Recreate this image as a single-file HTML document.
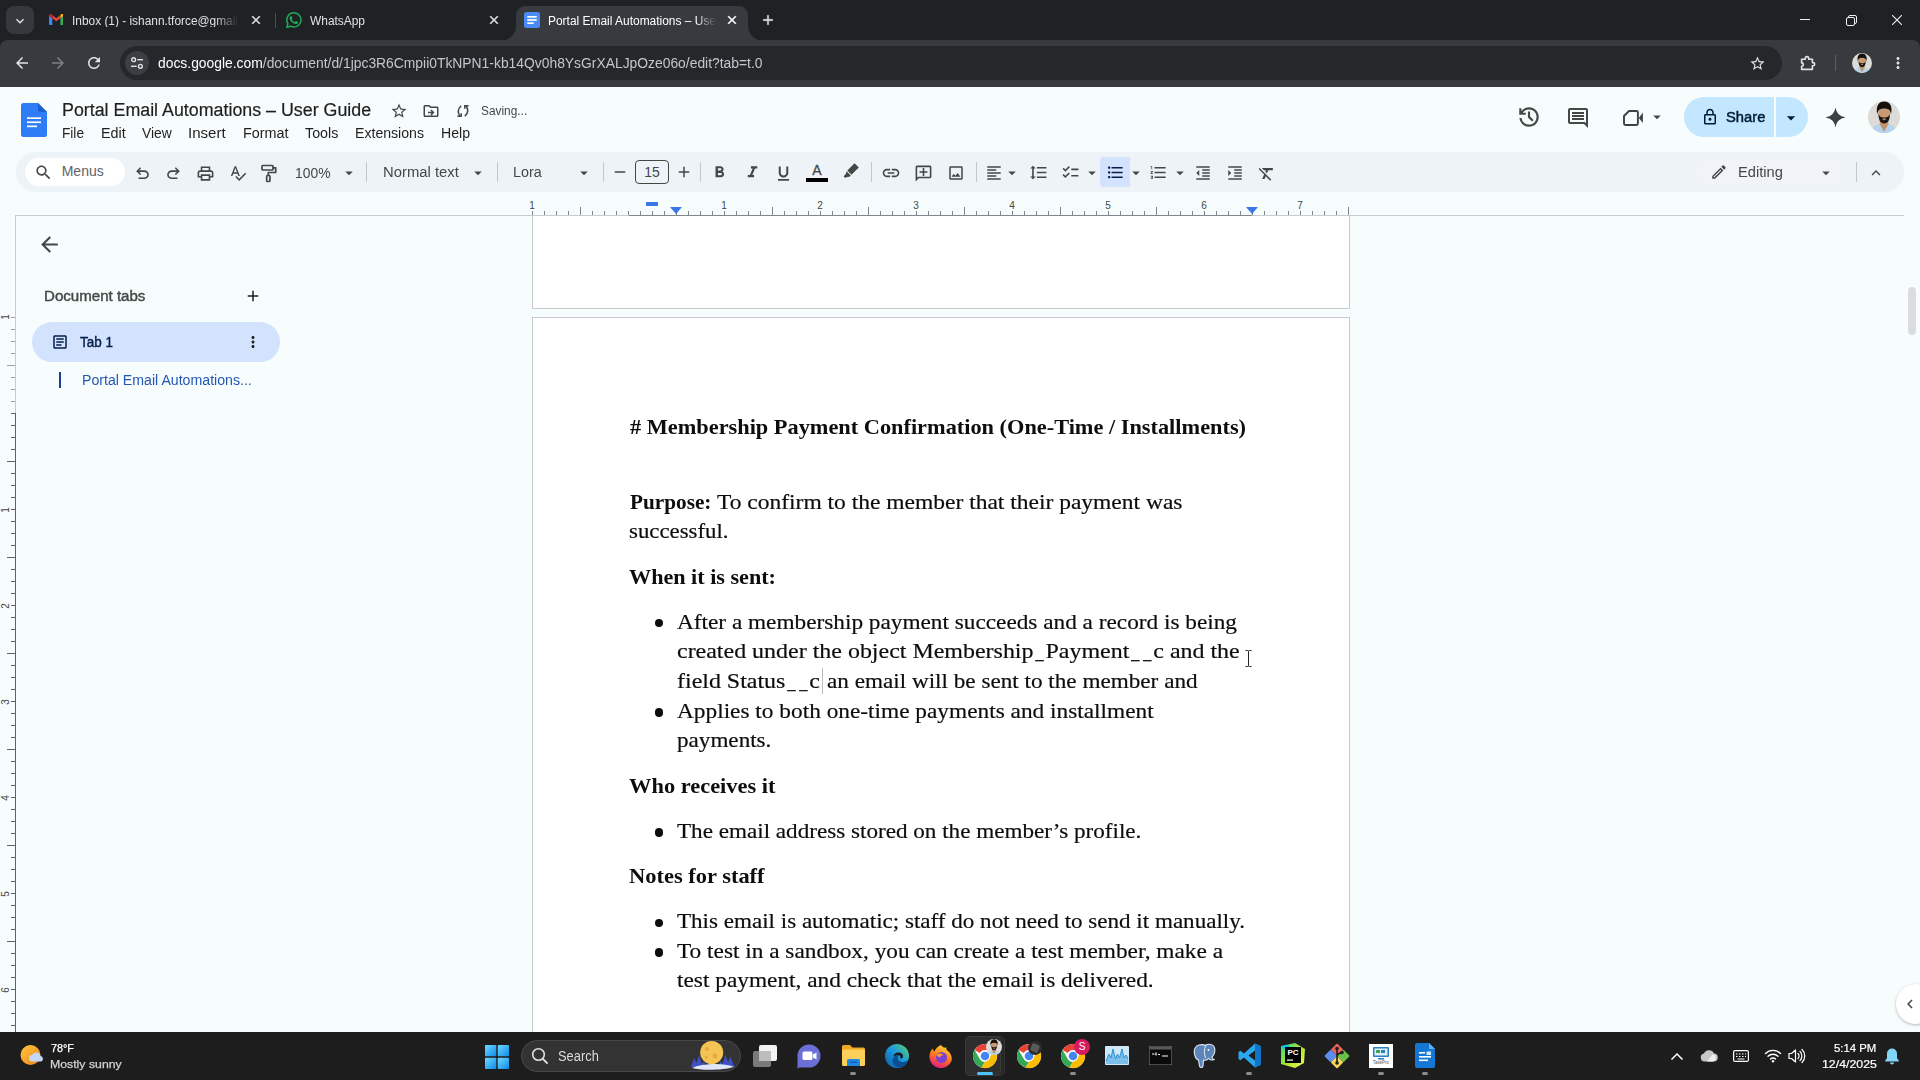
<!DOCTYPE html>
<html lang="en"><head><meta charset="utf-8"><title>Portal Email Automations – User Guide - Google Docs</title>
<style>
html,body{margin:0;padding:0}
body{width:1920px;height:1080px;overflow:hidden;position:relative;background:#f7fcfc;font-family:"Liberation Sans",sans-serif}
.a{position:absolute;display:block}
.t{position:absolute;display:block;white-space:nowrap;line-height:1;transform-origin:0 0;font-family:"Liberation Sans",sans-serif}
.s{font-family:"Liberation Serif",serif}
.u{display:inline-block;clip-path:inset(0 .07em)}
</style></head>
<body>
<div class="a" style="left:0px;top:0px;width:1920px;height:52px;background:#1f2225;"></div>
<div class="a" style="left:0px;top:40px;width:1920px;height:47px;background:#373a3e;border-radius:8px 8px 0 0;"></div>
<div class="a" style="left:6px;top:6px;width:28px;height:28px;background:#35383c;border-radius:8px;"></div>
<svg class="a" style="left:12.0px;top:12.5px;" width="16" height="16" viewBox="0 0 24 24" fill="#e3e3e3"><path d="M16.59 8.59L12 13.17 7.41 8.59 6 10l6 6 6-6z"/></svg>
<svg class="a" style="left:48.7px;top:14.3px;" width="14.7" height="11" viewBox="0 0 16 12"><path d="M0 1.600V11a1 1 0 0 0 1 1h2.600V4.600z" fill="#4285f4"/><path d="M16 1.600V11a1 1 0 0 1-1 1h-2.600V4.600z" fill="#34a853"/><path d="M12.400 1.200V4.600L16 1.900V1.400C16 .1 14.500-.5 13.500.3z" fill="#fbbc04"/><path d="M3.600 4.600V1.200L8 4.500l4.400-3.300v3.400L8 7.900z" fill="#ea4335"/><path d="M0 1.400v.5l3.600 2.700V1.200L2.500.3C1.500-.5 0 .1 0 1.400z" fill="#c5221f"/></svg>
<span class="t" id="t1" style="left:72.0px;top:14.8px;font-size:12px;color:#dfe1e5;transform:scaleX(0.9905);-webkit-mask-image:linear-gradient(90deg,#000 86%,transparent 100%);">Inbox (1) - ishann.tforce@gmail</span>
<svg class="a" style="left:249.0px;top:13.0px;stroke:#dfe1e5;stroke-width:.9;" width="14" height="14" viewBox="0 0 24 24" fill="#dfe1e5"><path d="M19 6.41L17.59 5 12 10.59 6.41 5 5 6.41 10.59 12 5 17.59 6.41 19 12 13.41 17.59 19 19 17.59 13.41 12z"/></svg>
<div class="a" style="left:275px;top:13px;width:1px;height:15px;background:#4a4d51;"></div>
<svg class="a" style="left:286px;top:12px;" width="16" height="16" viewBox="0 0 16 16"><path d="M8 .8A7.100 7.100 0 0 0 1.900 11.600L.9 15.200l3.700-1A7.100 7.100 0 1 0 8 .8z" fill="none" stroke="#1fad57" stroke-width="1.500"/><path d="M5.600 4.300c-.2-.4-.4-.4-.6-.4h-.5c-.2 0-.5.100-.7.400-.3.300-.9.900-.9 2.100s.9 2.400 1 2.600c.1.200 1.800 2.800 4.400 3.800 2.100.8 2.600.7 3 .6.500 0 1.500-.6 1.700-1.200.2-.600.2-1.100.1-1.200-.1-.1-.2-.2-.5-.3l-1.700-.8c-.2-.1-.4-.1-.6.100l-.8 1c-.1.200-.3.200-.5.100-.3-.1-1.100-.4-2-1.300-.8-.7-1.300-1.500-1.400-1.800-.1-.2 0-.4.100-.5l.4-.5c.1-.1.200-.3.200-.4.100-.2 0-.3 0-.4z" fill="#1fad57" transform="translate(1.200 1) scale(.82)"/></svg>
<span class="t" id="t2" style="left:310.0px;top:14.8px;font-size:12px;color:#dfe1e5;transform:scaleX(0.9935);">WhatsApp</span>
<svg class="a" style="left:487.0px;top:13.0px;stroke:#dfe1e5;stroke-width:.9;" width="14" height="14" viewBox="0 0 24 24" fill="#dfe1e5"><path d="M19 6.41L17.59 5 12 10.59 6.41 5 5 6.41 10.59 12 5 17.59 6.41 19 12 13.41 17.59 19 19 17.59 13.41 12z"/></svg>
<svg class="a" style="left:500px;top:6px;" width="264" height="35" viewBox="0 0 264 35"><path d="M0 35 C8 35 16 29 16 20 V10 C16 4 20 0 26 0 H238 C244 0 248 4 248 10 V20 C248 29 256 35 264 35 Z" fill="#373a3e"/></svg>
<svg class="a" style="left:524px;top:12px;" width="16" height="16" viewBox="0 0 16 16"><rect width="16" height="16" rx="2.500" fill="#4c8bf5"/><rect x="3.300" y="4" width="9.400" height="1.700" fill="#fff"/><rect x="3.300" y="7.150" width="9.400" height="1.700" fill="#fff"/><rect x="3.300" y="10.300" width="6.400" height="1.700" fill="#fff"/></svg>
<span class="t" id="t3" style="left:548.0px;top:14.8px;font-size:12px;color:#ffffff;transform:scaleX(0.9956);-webkit-mask-image:linear-gradient(90deg,#000 88%,transparent 100%);">Portal Email Automations – Use</span>
<svg class="a" style="left:724.5px;top:13.0px;stroke:#fff;stroke-width:.9;" width="14" height="14" viewBox="0 0 24 24" fill="#ffffff"><path d="M19 6.41L17.59 5 12 10.59 6.41 5 5 6.41 10.59 12 5 17.59 6.41 19 12 13.41 17.59 19 19 17.59 13.41 12z"/></svg>
<svg class="a" style="left:760.0px;top:12.0px;stroke:#e3e3e3;stroke-width:.6;" width="16" height="16" viewBox="0 0 24 24" fill="#e3e3e3"><path d="M19 13h-6v6h-2v-6H5v-2h6V5h2v6h6v2z"/></svg>
<div class="a" style="left:1800px;top:19px;width:10px;height:1px;background:#f0f0f0;"></div>
<svg class="a" style="left:1845.5px;top:14.5px;" width="11" height="11" viewBox="0 0 11 11"><rect x=".5" y="2.500" width="8" height="8" rx="1.500" fill="none" stroke="#f0f0f0"/><path d="M2.500 2.500V2a1.500 1.500 0 0 1 1.500-1.500h5A1.500 1.500 0 0 1 10.500 2v5A1.500 1.500 0 0 1 9 8.500h-.5" fill="none" stroke="#f0f0f0"/></svg>
<svg class="a" style="left:1892px;top:15px;" width="10" height="10" viewBox="0 0 10 10"><path d="M0 0l10 10M10 0L0 10" stroke="#f0f0f0" stroke-width="1.100"/></svg>
<svg class="a" style="left:13.0px;top:54.0px;" width="18" height="18" viewBox="0 0 24 24" fill="#e3e3e3"><path d="M20 11H7.83l5.59-5.59L12 4l-8 8 8 8 1.41-1.41L7.83 13H20v-2z"/></svg>
<svg class="a" style="left:48.5px;top:54.0px;" width="18" height="18" viewBox="0 0 24 24" fill="#7d8084"><path d="M12 4l-1.41 1.41L16.17 11H4v2h12.17l-5.58 5.59L12 20l8-8z"/></svg>
<svg class="a" style="left:85.0px;top:54.0px;" width="18" height="18" viewBox="0 0 24 24" fill="#e3e3e3"><path d="M17.65 6.35C16.2 4.9 14.21 4 12 4c-4.42 0-7.99 3.58-7.99 8s3.57 8 7.99 8c3.73 0 6.84-2.55 7.73-6h-2.08c-.82 2.33-3.04 4-5.65 4-3.31 0-6-2.69-6-6s2.69-6 6-6c1.66 0 3.14.69 4.22 1.78L13 11h7V4l-2.35 2.35z"/></svg>
<div class="a" style="left:120px;top:46px;width:1662px;height:34px;background:#25282b;border-radius:17px;"></div>
<div class="a" style="left:125px;top:51px;width:24px;height:24px;background:#3b3e42;border-radius:12px;"></div>
<svg class="a" style="left:129px;top:55px;" width="16" height="16" viewBox="0 0 16 16"><g fill="none" stroke="#e3e3e3" stroke-width="1.400"><circle cx="4.600" cy="4.700" r="1.900"/><path d="M8.300 4.700H14"/><circle cx="11.400" cy="11.300" r="1.900"/><path d="M2 11.300H7.700"/></g></svg>
<span class="t" id="t4" style="left:157.5px;top:56.1px;font-size:14px;color:#ffffff;transform:scaleX(0.9902);">docs.google.com<span style="color:#c3c6ca">/document/d/1jpc3R6Cmpii0TkNPN1-kb14Qv0h8YsGrXALJpOze06o/edit?tab=t.0</span></span>
<svg class="a" style="left:1749.3px;top:54.5px;" width="17" height="17" viewBox="0 0 24 24" fill="#e3e3e3"><path d="M22 9.24l-7.19-.62L12 2 9.19 8.63 2 9.24l5.46 4.73L5.82 21 12 17.27 18.18 21l-1.63-7.03L22 9.24zM12 15.4l-3.76 2.27 1-4.28-3.32-2.88 4.38-.38L12 6.1l1.71 4.04 4.38.38-3.32 2.88 1 4.28L12 15.4z"/></svg>
<svg class="a" style="left:1799px;top:54px;" width="18" height="18" viewBox="0 0 18 18"><path d="M2.600 5.200H6.300V4.300a1.700 1.700 0 0 1 3.400 0v.900H13.400V8.600h.700a1.600 1.600 0 0 1 0 3.200h-.700v3.600H2.600V12.300a1.700 1.700 0 0 0 0-3.400z" fill="none" stroke="#e3e3e3" stroke-width="1.600" stroke-linejoin="round"/></svg>
<div class="a" style="left:1835px;top:55px;width:1px;height:16px;background:#5a5d61;"></div>
<svg class="a" style="left:1852px;top:53px;" width="20" height="20" viewBox="0 0 32 32"><defs><clipPath id="c1"><circle cx="16" cy="16" r="16"/></clipPath></defs><g clip-path="url(#c1)"><rect width="32" height="32" fill="#dcdbd8"/><path d="M2 32C3 26.500 8 24 12 22.800L16 30l4-7.200C24 24 29 26.500 30 32z" fill="#b3d4ec"/><path d="M11.800 19.500h8.500V23.200L16 30.800 11.800 23.200z" fill="#c4946c"/><ellipse cx="16.200" cy="12.500" rx="5.800" ry="7.500" fill="#c99a72"/><path d="M10.400 12c0 7 2.100 10.500 5.800 10.500S22 19 22 12c-.5 3.500-2.500 4.500-5.800 4.500S10.900 15.500 10.400 12z" fill="#1d1612"/><ellipse cx="16.200" cy="18.300" rx="1.800" ry="1" fill="#a98366"/><path d="M9.300 13.500C7.500 5 11 .6 16.200 .6S25 5 23 13.500C22.500 9.500 21 7.500 16.200 7.500S9.800 9.500 9.300 13.500z" fill="#17110e"/></g></svg>
<svg class="a" style="left:1889.0px;top:54.0px;" width="18" height="18" viewBox="0 0 24 24" fill="#e3e3e3"><path d="M12 8c1.1 0 2-.9 2-2s-.9-2-2-2-2 .9-2 2 .9 2 2 2zm0 2c-1.1 0-2 .9-2 2s.9 2 2 2 2-.9 2-2-.9-2-2-2zm0 6c-1.1 0-2 .9-2 2s.9 2 2 2 2-.9 2-2-.9-2-2-2z"/></svg>
<div class="a" style="left:0px;top:87px;width:1920px;height:945px;background:#f7fcfc;"></div>
<svg class="a" style="left:21px;top:103px;" width="26" height="34" viewBox="0 0 26 34"><path d="M2.500 0H17l9 9v22.500A2.500 2.500 0 0 1 23.500 34h-21A2.500 2.500 0 0 1 0 31.500v-29A2.500 2.500 0 0 1 2.500 0z" fill="#2f7df6"/><path d="M17 0l9 9h-6.500A2.500 2.500 0 0 1 17 6.500z" fill="#1c5fd0"/><rect x="6" y="14.300" width="14" height="1.700" fill="#fff"/><rect x="6" y="18.400" width="14" height="1.700" fill="#fff"/><rect x="6" y="22.500" width="10" height="1.700" fill="#fff"/></svg>
<span class="t" id="t5" style="left:61.7px;top:100.8px;font-size:18px;color:#1f1f1f;transform:scaleX(0.9902);-webkit-text-stroke:.2px #1f1f1f;">Portal Email Automations – User Guide</span>
<svg class="a" style="left:389.8px;top:102.0px;" width="18" height="18" viewBox="0 0 24 24" fill="#444746"><path d="M22 9.24l-7.19-.62L12 2 9.19 8.63 2 9.24l5.46 4.73L5.82 21 12 17.27 18.18 21l-1.63-7.03L22 9.24zM12 15.4l-3.76 2.27 1-4.28-3.32-2.88 4.38-.38L12 6.1l1.71 4.04 4.38.38-3.32 2.88 1 4.28L12 15.4z"/></svg>
<svg class="a" style="left:421.8px;top:102.0px;" width="18" height="18" viewBox="0 0 24 24" fill="#444746"><path d="M20 6h-8l-2-2H4c-1.100 0-1.990.9-1.990 2L2 18c0 1.100.9 2 2 2h16c1.100 0 2-.9 2-2V8c0-1.100-.9-2-2-2zm0 12H4V6h5.170l2 2H20v10zm-7.160-5H8v2h4.840l-1.590 1.590L12.660 18l4-4-4-4-1.410 1.410L12.840 13z"/></svg>
<svg class="a" style="left:456px;top:103.8px;" width="14" height="14" viewBox="-7 -7 14 14"><g fill="none" stroke="#444746" stroke-width="1.500"><path d="M-1.800-5.300Q-7.200-.3-2.800 5.200"/><path d="M-5.600 5.300H-1.800V2.300"/><path d="M1.800 5.300Q7.200 .3 2.800-5.200"/><path d="M5.600-5.300H1.800V-2.300"/></g></svg>
<span class="t" id="t6" style="left:480.5px;top:105.1px;font-size:12.5px;color:#444746;transform:scaleX(0.9498);">Saving...</span>
<span class="t" id="t7" style="left:62.3px;top:126.1px;font-size:14px;color:#1f1f1f;transform:scaleX(0.9751);">File</span>
<span class="t" id="t8" style="left:101.0px;top:126.1px;font-size:14px;color:#1f1f1f;transform:scaleX(1.0238);">Edit</span>
<span class="t" id="t9" style="left:142.3px;top:126.1px;font-size:14px;color:#1f1f1f;transform:scaleX(0.9869);">View</span>
<span class="t" id="t10" style="left:188.3px;top:126.1px;font-size:14px;color:#1f1f1f;transform:scaleX(1.0767);">Insert</span>
<span class="t" id="t11" style="left:242.7px;top:126.1px;font-size:14px;color:#1f1f1f;transform:scaleX(1.0283);">Format</span>
<span class="t" id="t12" style="left:305.0px;top:126.1px;font-size:14px;color:#1f1f1f;transform:scaleX(1.0187);">Tools</span>
<span class="t" id="t13" style="left:355.3px;top:126.1px;font-size:14px;color:#1f1f1f;transform:scaleX(1.0075);">Extensions</span>
<span class="t" id="t14" style="left:441.3px;top:126.1px;font-size:14px;color:#1f1f1f;transform:scaleX(1.0071);">Help</span>
<svg class="a" style="left:1516.0px;top:103.8px;" width="26" height="26" viewBox="0 0 24 24" fill="#444746"><path d="M12 21q-3.450 0-6.013-2.288T3.050 13H5.100q.350 2.600 2.313 4.300T12 19q2.925 0 4.963-2.038T19 12q0-2.925-2.038-4.963T12 5q-1.725 0-3.225.800T6.250 8H9v2H3V4h2v2.350q1.275-1.600 3.113-2.475T12 3q1.875 0 3.513.713t2.850 1.924q1.212 1.213 1.925 2.850T21 12q0 1.875-.713 3.513t-1.924 2.850q-1.213 1.212-2.850 1.925T12 21Zm2.800-4.800L11 12.400V7h2v4.600l3.200 3.200-1.400 1.400Z"/></svg>
<svg class="a" style="left:1566.0px;top:105.5px;" width="24" height="24" viewBox="0 0 24 24" fill="#444746"><path d="M21.990 4c0-1.100-.890-2-1.990-2H4c-1.100 0-2 .9-2 2v12c0 1.100.9 2 2 2h14l4 4-.010-18zM20 4v13.170L18.830 16H4V4h16zM6 12h12v2H6zm0-3h12v2H6zm0-3h12v2H6z"/></svg>
<svg class="a" style="left:1620px;top:106px;" width="26" height="24" viewBox="0 0 26 24"><path d="M9 5H16.400a1.500 1.500 0 0 1 1.500 1.500V17.500a1.500 1.500 0 0 1-1.500 1.500H5.500A1.500 1.500 0 0 1 4 17.500V10z" fill="none" stroke="#3c4043" stroke-width="1.900" stroke-linejoin="round"/><path d="M18.800 11.900L22.900 6.600V17.100z" fill="#3c4043"/></svg>
<svg class="a" style="left:1648.0px;top:108.0px;" width="18" height="18" viewBox="0 0 24 24" fill="#444746"><path d="M7 10l5 5 5-5z"/></svg>
<div class="a" style="left:1684px;top:97px;width:124px;height:40px;background:#c2e7ff;border-radius:20px;"></div>
<div class="a" style="left:1774px;top:97px;width:1.5px;height:40px;background:#f7fcfc;"></div>
<svg class="a" style="left:1701.0px;top:107.5px;" width="18" height="18" viewBox="0 0 24 24" fill="#001d35"><path d="M18 8h-1V6c0-2.760-2.240-5-5-5S7 3.240 7 6v2H6c-1.100 0-2 .9-2 2v10c0 1.100.9 2 2 2h12c1.100 0 2-.9 2-2V10c0-1.100-.9-2-2-2zM9 6c0-1.660 1.340-3 3-3s3 1.340 3 3v2H9V6zm9 14H6V10h12v10zm-6-3c1.100 0 2-.9 2-2s-.9-2-2-2-2 .9-2 2 .9 2 2 2z"/></svg>
<span class="t" id="t15" style="left:1726.4px;top:109.5px;font-size:14px;color:#001d35;transform:scaleX(1.0546);-webkit-text-stroke:.45px #001d35;">Share</span>
<svg class="a" style="left:1780.5px;top:107.5px;" width="20" height="20" viewBox="0 0 24 24" fill="#001d35"><path d="M7 10l5 5 5-5z"/></svg>
<svg class="a" style="left:1824.3px;top:105.5px;" width="23" height="23" viewBox="0 0 24 24" fill="#3c4043"><path d="M12 1.500Q13.300 10.700 22.500 12 13.300 13.300 12 22.500 10.700 13.300 1.500 12 10.700 10.700 12 1.500Z"/></svg>
<svg class="a" style="left:1868px;top:101px;" width="32" height="32" viewBox="0 0 32 32"><defs><clipPath id="c2"><circle cx="16" cy="16" r="16"/></clipPath></defs><g clip-path="url(#c2)"><rect width="32" height="32" fill="#dcdbd8"/><path d="M2 32C3 26.500 8 24 12 22.800L16 30l4-7.200C24 24 29 26.500 30 32z" fill="#b3d4ec"/><path d="M11.800 19.500h8.500V23.200L16 30.800 11.800 23.200z" fill="#c4946c"/><ellipse cx="16.200" cy="12.500" rx="5.800" ry="7.500" fill="#c99a72"/><path d="M10.400 12c0 7 2.100 10.500 5.800 10.500S22 19 22 12c-.5 3.500-2.500 4.500-5.800 4.500S10.900 15.500 10.400 12z" fill="#1d1612"/><ellipse cx="16.200" cy="18.300" rx="1.800" ry="1" fill="#a98366"/><path d="M9.300 13.500C7.500 5 11 .6 16.200 .6S25 5 23 13.500C22.500 9.500 21 7.500 16.200 7.500S9.800 9.500 9.300 13.500z" fill="#17110e"/></g></svg>
<div class="a" style="left:16px;top:152px;width:1888px;height:40px;background:#eef3f8;border-radius:20px;"></div>
<div class="a" style="left:25px;top:158px;width:100px;height:28px;background:#ffffff;border-radius:14px;"></div>
<svg class="a" style="left:34.0px;top:163.0px;" width="19" height="19" viewBox="0 0 24 24" fill="#444746"><path d="M15.5 14h-.79l-.28-.27C15.41 12.59 16 11.11 16 9.5 16 5.91 13.09 3 9.5 3S3 5.91 3 9.5 5.91 16 9.5 16c1.61 0 3.09-.59 4.23-1.57l.27.28v.79l5 4.99L20.49 19l-4.99-5zm-6 0C7.01 14 5 11.99 5 9.5S7.01 5 9.5 5 14 7.01 14 9.5 11.99 14 9.5 14z"/></svg>
<span class="t" id="t16" style="left:61.7px;top:163.7px;font-size:14px;color:#5f6368;">Menus</span>
<svg class="a" style="left:132.5px;top:163.5px;" width="19" height="19" viewBox="0 0 24 24" fill="#444746"><path d="M7 19v-2h7.1q1.575 0 2.738-1T18 13.5q0-1.5-1.163-2.5T14.1 10H7.8l2.6 2.6L9 14 4 9l5-5 1.4 1.4L7.8 8h6.3q2.425 0 4.163 1.575T20 13.5q0 2.35-1.737 3.925T14.1 19H7Z"/></svg>
<svg class="a" style="left:164.2px;top:163.5px;transform:scaleX(-1);" width="19" height="19" viewBox="0 0 24 24" fill="#444746"><path d="M7 19v-2h7.1q1.575 0 2.738-1T18 13.5q0-1.5-1.163-2.5T14.1 10H7.8l2.6 2.6L9 14 4 9l5-5 1.4 1.4L7.8 8h6.3q2.425 0 4.163 1.575T20 13.5q0 2.35-1.737 3.925T14.1 19H7Z"/></svg>
<svg class="a" style="left:196.3px;top:163.5px;" width="19" height="19" viewBox="0 0 24 24" fill="#444746"><path d="M19 8h-1V3H6v5H5c-1.66 0-3 1.34-3 3v6h4v4h12v-4h4v-6c0-1.66-1.34-3-3-3zM8 5h8v3H8V5zm8 14H8v-4h8v4zm2-4v-2H6v2H4v-4c0-.55.45-1 1-1h14c.55 0 1 .45 1 1v4h-2z"/></svg>
<svg class="a" style="left:229.0px;top:164.0px;" width="18" height="18" viewBox="0 0 24 24" fill="#444746"><path d="M12.45 16h2.09L9.43 3H7.57L2.46 16h2.09l1.12-3h5.64l1.14 3zm-6.02-5L8.5 5.48 10.57 11H6.43zm15.16.59l-8.09 8.09L9.83 16l-1.41 1.41 5.09 5.09L23 13l-1.41-1.41z"/></svg>
<svg class="a" style="left:260px;top:164px;" width="18" height="19" viewBox="0 0 18 19"><g fill="none" stroke="#444746" stroke-width="1.700" stroke-linejoin="round"><rect x="2" y="1.500" width="11" height="4.500" rx=".8"/><path d="M13 3.800h2.700v4.700H8.300v3"/><rect x="6.700" y="11.500" width="3.200" height="6" rx=".8"/></g></svg>
<span class="t" id="t17" style="left:295.3px;top:165.7px;font-size:14px;color:#444746;transform:scaleX(0.9913);">100%</span>
<svg class="a" style="left:339.8px;top:163.7px;" width="18" height="18" viewBox="0 0 24 24" fill="#444746"><path d="M7 10l5 5 5-5z"/></svg>
<div class="a" style="left:366px;top:162px;width:1px;height:20px;background:#c7c7c7;"></div>
<span class="t" id="t18" style="left:382.5px;top:165.1px;font-size:14px;color:#444746;transform:scaleX(1.0590);">Normal text</span>
<svg class="a" style="left:468.8px;top:163.7px;" width="18" height="18" viewBox="0 0 24 24" fill="#444746"><path d="M7 10l5 5 5-5z"/></svg>
<div class="a" style="left:497px;top:162px;width:1px;height:20px;background:#c7c7c7;"></div>
<span class="t" id="t19" style="left:513.3px;top:165.1px;font-size:14px;color:#444746;transform:scaleX(1.0239);">Lora</span>
<svg class="a" style="left:574.7px;top:163.7px;" width="18" height="18" viewBox="0 0 24 24" fill="#444746"><path d="M7 10l5 5 5-5z"/></svg>
<div class="a" style="left:603px;top:162px;width:1px;height:20px;background:#c7c7c7;"></div>
<svg class="a" style="left:611.0px;top:163.0px;" width="18" height="18" viewBox="0 0 24 24" fill="#444746"><path d="M19 13H5v-2h14v2z"/></svg>
<div class="a" style="left:635px;top:160px;width:32px;height:22px;border:1px solid #444746;border-radius:4px;"></div>
<span class="t" style="left:652.0px;top:164.9px;font-size:14px;color:#444746;width:60px;margin-left:-30px;text-align:center;">15</span>
<svg class="a" style="left:674.8px;top:163.0px;" width="18" height="18" viewBox="0 0 24 24" fill="#444746"><path d="M19 13h-6v6h-2v-6H5v-2h6V5h2v6h6v2z"/></svg>
<div class="a" style="left:700px;top:162px;width:1px;height:20px;background:#c7c7c7;"></div>
<svg class="a" style="left:710.2px;top:163.0px;" width="19" height="19" viewBox="0 0 24 24" fill="#444746"><path d="M15.6 10.79c.97-.67 1.65-1.77 1.65-2.79 0-2.26-1.75-4-4-4H7v14h7.04c2.09 0 3.71-1.7 3.71-3.79 0-1.52-.86-2.82-2.15-3.42zM10 6.5h3c.83 0 1.5.67 1.5 1.5s-.67 1.5-1.5 1.5h-3v-3zm3.500 9H10v-3h3.500c.83 0 1.500.67 1.500 1.500s-.67 1.500-1.500 1.500z"/></svg>
<svg class="a" style="left:742.5px;top:163.0px;" width="19" height="19" viewBox="0 0 24 24" fill="#444746"><path d="M10 4v3h2.21l-3.42 8H6v3h8v-3h-2.21l3.42-8H18V4z"/></svg>
<svg class="a" style="left:774.3px;top:163.5px;" width="19" height="19" viewBox="0 0 24 24" fill="#444746"><path d="M12 17c3.31 0 6-2.69 6-6V3h-2.5v8c0 1.93-1.57 3.5-3.5 3.5S8.5 12.930 8.5 11V3H6v8c0 3.31 2.69 6 6 6zm-7 2v2h14v-2H5z"/></svg>
<span class="t" style="left:817.0px;top:163.3px;font-size:14px;color:#444746;width:60px;margin-left:-30px;text-align:center;-webkit-text-stroke:.3px #444746;">A</span>
<div class="a" style="left:806px;top:178px;width:22px;height:4px;background:#000000;"></div>
<svg class="a" style="left:841px;top:161px;" width="20" height="20" viewBox="0 0 20 20"><path d="M13.600 2.200l4.200 4.200-7.300 7.300-4.200-4.200z" fill="#444746"/><path d="M5.600 10.200l4.200 4.200-1.400 1.400-3.200.4-.8.800-1.800-1.800 2.200-2.200z" fill="#444746"/></svg>
<div class="a" style="left:871px;top:162px;width:1px;height:20px;background:#c7c7c7;"></div>
<svg class="a" style="left:880.8px;top:162.7px;" width="20" height="20" viewBox="0 0 24 24" fill="#444746"><path d="M3.9 12c0-1.71 1.39-3.1 3.1-3.1h4V7H7c-2.76 0-5 2.24-5 5s2.24 5 5 5h4v-1.9H7c-1.71 0-3.1-1.39-3.1-3.1zM8 13h8v-2H8v2zm9-6h-4v1.9h4c1.71 0 3.1 1.39 3.1 3.1s-1.39 3.1-3.1 3.1h-4V17h4c2.76 0 5-2.24 5-5s-2.240-5-5-5z"/></svg>
<svg class="a" style="left:913.5px;top:164.2px;transform:scaleX(-1);" width="19" height="19" viewBox="0 0 24 24" fill="#444746"><path d="M22 4c0-1.100-.9-2-2-2H4c-1.100 0-2 .9-2 2v12c0 1.100.9 2 2 2h14l4 4V4zm-2 13.170L18.830 16H4V4h16v13.170zM13 5h-2v4H7v2h4v4h2v-4h4V9h-4z"/></svg>
<svg class="a" style="left:946.8px;top:163.7px;" width="18" height="18" viewBox="0 0 24 24" fill="#444746"><path d="M19 5v14H5V5h14m0-2H5c-1.100 0-2 .9-2 2v14c0 1.100.9 2 2 2h14c1.100 0 2-.9 2-2V5c0-1.100-.9-2-2-2zm-4.860 8.860l-3 3.870L9 13.140 6 17h12l-3.860-5.140z"/></svg>
<div class="a" style="left:976px;top:162px;width:1px;height:20px;background:#c7c7c7;"></div>
<svg class="a" style="left:984.8px;top:163.7px;" width="18" height="18" viewBox="0 0 24 24" fill="#444746"><path d="M15 15H3v2h12v-2zm0-8H3v2h12V7zM3 13h18v-2H3v2zm0 8h18v-2H3v2zM3 3v2h18V3H3z"/></svg>
<svg class="a" style="left:1003.0px;top:163.7px;" width="18" height="18" viewBox="0 0 24 24" fill="#444746"><path d="M7 10l5 5 5-5z"/></svg>
<svg class="a" style="left:1028.5px;top:163.2px;" width="19" height="19" viewBox="0 0 24 24" fill="#444746"><path d="M6 7h2.5L5 3.5 1.5 7H4v10H1.5L5 20.500 8.500 17H6V7zm4-2v2h12V5H10zm0 14h12v-2H10v2zm0-6h12v-2H10v2z"/></svg>
<svg class="a" style="left:1061.3px;top:163.2px;" width="19" height="19" viewBox="0 0 24 24" fill="#444746"><path d="M22 7h-9v2h9V7zm0 8h-9v2h9v-2zM5.540 11L2 7.460l1.410-1.410 2.120 2.120 4.240-4.240 1.410 1.410L5.540 11zm0 8L2 15.460l1.410-1.410 2.120 2.120 4.240-4.240 1.410 1.410L5.540 19z"/></svg>
<svg class="a" style="left:1082.7px;top:163.7px;" width="18" height="18" viewBox="0 0 24 24" fill="#444746"><path d="M7 10l5 5 5-5z"/></svg>
<div class="a" style="left:1100px;top:157px;width:30px;height:30px;background:#d3e3fd;border-radius:4px 0 0 4px;"></div>
<svg class="a" style="left:1105.5px;top:163.2px;" width="19" height="19" viewBox="0 0 24 24" fill="#041e49"><path d="M4 10.500c-.830 0-1.500.670-1.500 1.500s.670 1.500 1.500 1.500 1.500-.670 1.500-1.500-.670-1.500-1.500-1.500zm0-6c-.830 0-1.500.670-1.500 1.500S3.170 7.500 4 7.500 5.500 6.830 5.500 6 4.830 4.500 4 4.500zm0 12c-.830 0-1.500.680-1.500 1.500s.680 1.500 1.500 1.500 1.500-.680 1.500-1.500-.670-1.500-1.500-1.500zM7 19h14v-2H7v2zm0-6h14v-2H7v2zm0-8v2h14V5H7z"/></svg>
<svg class="a" style="left:1126.8px;top:163.7px;" width="18" height="18" viewBox="0 0 24 24" fill="#444746"><path d="M7 10l5 5 5-5z"/></svg>
<svg class="a" style="left:1149.3px;top:163.2px;" width="19" height="19" viewBox="0 0 24 24" fill="#444746"><path d="M2 17h2v.5H3v1h1v.5H2v1h3v-4H2v1zm1-9h1V4H2v1h1v3zm-1 3h1.800L2 13.100v.9h3v-1H3.200L5 10.900V10H2v1zm5-6v2h14V5H7zm0 14h14v-2H7v2zm0-6h14v-2H7v2z"/></svg>
<svg class="a" style="left:1171.0px;top:163.7px;" width="18" height="18" viewBox="0 0 24 24" fill="#444746"><path d="M7 10l5 5 5-5z"/></svg>
<svg class="a" style="left:1194.0px;top:163.7px;" width="18" height="18" viewBox="0 0 24 24" fill="#444746"><path d="M11 17h10v-2H11v2zm-8-5l4 4V8l-4 4zm0 9h18v-2H3v2zM3 3v2h18V3H3zm8 6h10V7H11v2zm0 4h10v-2H11v2z"/></svg>
<svg class="a" style="left:1226.0px;top:163.7px;" width="18" height="18" viewBox="0 0 24 24" fill="#444746"><path d="M3 21h18v-2H3v2zM3 8v8l4-4-4-4zm8 9h10v-2H11v2zM3 3v2h18V3H3zm8 6h10V7H11v2zm0 4h10v-2H11v2z"/></svg>
<svg class="a" style="left:1257.2px;top:163.5px;" width="19" height="19" viewBox="0 0 24 24" fill="#444746"><path d="M3.270 5L2 6.270l6.970 6.970L6.500 19h3l1.570-3.660L16.730 21 18 19.730 3.550 5.270 3.270 5zM6 5v.180L8.820 8h2.400l-.720 1.680 2.100 2.100L14.210 8H20V5H6z"/></svg>
<div class="a" style="left:1696px;top:156.5px;width:151px;height:31px;background:#f0f4f9;border-radius:16px;"></div>
<svg class="a" style="left:1709.8px;top:163.0px;" width="18" height="18" viewBox="0 0 24 24" fill="#444746"><path d="M14.060 9.020l.920.920L5.920 19H5v-.920l9.060-9.060M17.660 3c-.250 0-.510.100-.700.290l-1.830 1.830 3.750 3.750 1.830-1.830c.390-.390.390-1.020 0-1.410l-2.340-2.340c-.200-.200-.450-.290-.710-.290zm-3.600 3.190L3 17.250V21h3.750L17.810 9.940l-3.750-3.750z"/></svg>
<span class="t" id="t20" style="left:1737.8px;top:164.9px;font-size:14px;color:#444746;transform:scaleX(1.0464);">Editing</span>
<svg class="a" style="left:1817.0px;top:163.7px;" width="18" height="18" viewBox="0 0 24 24" fill="#444746"><path d="M7 10l5 5 5-5z"/></svg>
<div class="a" style="left:1856px;top:162px;width:1px;height:20px;background:#c7c7c7;"></div>
<svg class="a" style="left:1866.8px;top:164.0px;" width="18" height="18" viewBox="0 0 24 24" fill="#444746"><path d="M12 8l-6 6 1.41 1.41L12 10.83l4.59 4.58L18 14z"/></svg>
<div class="a" style="left:15px;top:215px;width:1889px;height:1px;background:#c9cccf;"></div>
<div class="a" style="left:15px;top:215px;width:1px;height:817px;background:#c9cccf;"></div>
<div class="a" style="left:15px;top:413px;width:1px;height:619px;background:#5f6368;"></div>
<div class="a" style="left:629px;top:215px;width:623px;height:1px;background:#80868b;"></div>
<svg class="a" style="left:532px;top:206px;" width="818" height="10" viewBox="0 0 818 10"><g fill="#80868b"><rect x="0" y="5" width="1" height="4"/><rect x="12" y="5" width="1" height="4"/><rect x="24" y="5" width="1" height="4"/><rect x="36" y="5" width="1" height="4"/><rect x="48" y="1" width="1" height="8"/><rect x="60" y="5" width="1" height="4"/><rect x="72" y="5" width="1" height="4"/><rect x="84" y="5" width="1" height="4"/><rect x="96" y="5" width="1" height="4"/><rect x="108" y="5" width="1" height="4"/><rect x="120" y="5" width="1" height="4"/><rect x="132" y="5" width="1" height="4"/><rect x="144" y="1" width="1" height="8"/><rect x="156" y="5" width="1" height="4"/><rect x="168" y="5" width="1" height="4"/><rect x="180" y="5" width="1" height="4"/><rect x="192" y="5" width="1" height="4"/><rect x="204" y="5" width="1" height="4"/><rect x="216" y="5" width="1" height="4"/><rect x="228" y="5" width="1" height="4"/><rect x="240" y="1" width="1" height="8"/><rect x="252" y="5" width="1" height="4"/><rect x="264" y="5" width="1" height="4"/><rect x="276" y="5" width="1" height="4"/><rect x="288" y="5" width="1" height="4"/><rect x="300" y="5" width="1" height="4"/><rect x="312" y="5" width="1" height="4"/><rect x="324" y="5" width="1" height="4"/><rect x="336" y="1" width="1" height="8"/><rect x="348" y="5" width="1" height="4"/><rect x="360" y="5" width="1" height="4"/><rect x="372" y="5" width="1" height="4"/><rect x="384" y="5" width="1" height="4"/><rect x="396" y="5" width="1" height="4"/><rect x="408" y="5" width="1" height="4"/><rect x="420" y="5" width="1" height="4"/><rect x="432" y="1" width="1" height="8"/><rect x="444" y="5" width="1" height="4"/><rect x="456" y="5" width="1" height="4"/><rect x="468" y="5" width="1" height="4"/><rect x="480" y="5" width="1" height="4"/><rect x="492" y="5" width="1" height="4"/><rect x="504" y="5" width="1" height="4"/><rect x="516" y="5" width="1" height="4"/><rect x="528" y="1" width="1" height="8"/><rect x="540" y="5" width="1" height="4"/><rect x="552" y="5" width="1" height="4"/><rect x="564" y="5" width="1" height="4"/><rect x="576" y="5" width="1" height="4"/><rect x="588" y="5" width="1" height="4"/><rect x="600" y="5" width="1" height="4"/><rect x="612" y="5" width="1" height="4"/><rect x="624" y="1" width="1" height="8"/><rect x="636" y="5" width="1" height="4"/><rect x="648" y="5" width="1" height="4"/><rect x="660" y="5" width="1" height="4"/><rect x="672" y="5" width="1" height="4"/><rect x="684" y="5" width="1" height="4"/><rect x="696" y="5" width="1" height="4"/><rect x="708" y="5" width="1" height="4"/><rect x="720" y="1" width="1" height="8"/><rect x="732" y="5" width="1" height="4"/><rect x="744" y="5" width="1" height="4"/><rect x="756" y="5" width="1" height="4"/><rect x="768" y="5" width="1" height="4"/><rect x="780" y="5" width="1" height="4"/><rect x="792" y="5" width="1" height="4"/><rect x="804" y="5" width="1" height="4"/><rect x="816" y="1" width="1" height="8"/></g></svg>
<span class="t" style="left:532.0px;top:201.1px;font-size:10px;color:#444746;width:60px;margin-left:-30px;text-align:center;">1</span>
<span class="t" style="left:724.0px;top:201.1px;font-size:10px;color:#444746;width:60px;margin-left:-30px;text-align:center;">1</span>
<span class="t" style="left:820.0px;top:201.1px;font-size:10px;color:#444746;width:60px;margin-left:-30px;text-align:center;">2</span>
<span class="t" style="left:916.0px;top:201.1px;font-size:10px;color:#444746;width:60px;margin-left:-30px;text-align:center;">3</span>
<span class="t" style="left:1012.0px;top:201.1px;font-size:10px;color:#444746;width:60px;margin-left:-30px;text-align:center;">4</span>
<span class="t" style="left:1108.0px;top:201.1px;font-size:10px;color:#444746;width:60px;margin-left:-30px;text-align:center;">5</span>
<span class="t" style="left:1204.0px;top:201.1px;font-size:10px;color:#444746;width:60px;margin-left:-30px;text-align:center;">6</span>
<span class="t" style="left:1300.0px;top:201.1px;font-size:10px;color:#444746;width:60px;margin-left:-30px;text-align:center;">7</span>
<div class="a" style="left:646px;top:202px;width:12px;height:4px;background:#3b78e7;"></div>
<svg class="a" style="left:670px;top:207px;" width="12" height="7" viewBox="0 0 12 7"><path d="M0 0H12L6 7z" fill="#3b78e7"/></svg>
<svg class="a" style="left:1246px;top:207px;" width="12" height="7" viewBox="0 0 12 7"><path d="M0 0H12L6 7z" fill="#3b78e7"/></svg>
<svg class="a" style="left:0px;top:300px;" width="16" height="732" viewBox="0 0 16 732"><rect x="11" y="17" width="4" height="1" fill="#9aa0a6"/><rect x="11" y="29" width="4" height="1" fill="#9aa0a6"/><rect x="11" y="41" width="4" height="1" fill="#9aa0a6"/><rect x="11" y="53" width="4" height="1" fill="#9aa0a6"/><rect x="7" y="65" width="8" height="1" fill="#9aa0a6"/><rect x="11" y="77" width="4" height="1" fill="#9aa0a6"/><rect x="11" y="89" width="4" height="1" fill="#9aa0a6"/><rect x="11" y="101" width="4" height="1" fill="#9aa0a6"/><rect x="11" y="113" width="4" height="1" fill="#5f6368"/><rect x="11" y="125" width="4" height="1" fill="#5f6368"/><rect x="11" y="137" width="4" height="1" fill="#5f6368"/><rect x="11" y="149" width="4" height="1" fill="#5f6368"/><rect x="7" y="161" width="8" height="1" fill="#5f6368"/><rect x="11" y="173" width="4" height="1" fill="#5f6368"/><rect x="11" y="185" width="4" height="1" fill="#5f6368"/><rect x="11" y="197" width="4" height="1" fill="#5f6368"/><rect x="11" y="209" width="4" height="1" fill="#5f6368"/><rect x="11" y="221" width="4" height="1" fill="#5f6368"/><rect x="11" y="233" width="4" height="1" fill="#5f6368"/><rect x="11" y="245" width="4" height="1" fill="#5f6368"/><rect x="7" y="257" width="8" height="1" fill="#5f6368"/><rect x="11" y="269" width="4" height="1" fill="#5f6368"/><rect x="11" y="281" width="4" height="1" fill="#5f6368"/><rect x="11" y="293" width="4" height="1" fill="#5f6368"/><rect x="11" y="305" width="4" height="1" fill="#5f6368"/><rect x="11" y="317" width="4" height="1" fill="#5f6368"/><rect x="11" y="329" width="4" height="1" fill="#5f6368"/><rect x="11" y="341" width="4" height="1" fill="#5f6368"/><rect x="7" y="353" width="8" height="1" fill="#5f6368"/><rect x="11" y="365" width="4" height="1" fill="#5f6368"/><rect x="11" y="377" width="4" height="1" fill="#5f6368"/><rect x="11" y="389" width="4" height="1" fill="#5f6368"/><rect x="11" y="401" width="4" height="1" fill="#5f6368"/><rect x="11" y="413" width="4" height="1" fill="#5f6368"/><rect x="11" y="425" width="4" height="1" fill="#5f6368"/><rect x="11" y="437" width="4" height="1" fill="#5f6368"/><rect x="7" y="449" width="8" height="1" fill="#5f6368"/><rect x="11" y="461" width="4" height="1" fill="#5f6368"/><rect x="11" y="473" width="4" height="1" fill="#5f6368"/><rect x="11" y="485" width="4" height="1" fill="#5f6368"/><rect x="11" y="497" width="4" height="1" fill="#5f6368"/><rect x="11" y="509" width="4" height="1" fill="#5f6368"/><rect x="11" y="521" width="4" height="1" fill="#5f6368"/><rect x="11" y="533" width="4" height="1" fill="#5f6368"/><rect x="7" y="545" width="8" height="1" fill="#5f6368"/><rect x="11" y="557" width="4" height="1" fill="#5f6368"/><rect x="11" y="569" width="4" height="1" fill="#5f6368"/><rect x="11" y="581" width="4" height="1" fill="#5f6368"/><rect x="11" y="593" width="4" height="1" fill="#5f6368"/><rect x="11" y="605" width="4" height="1" fill="#5f6368"/><rect x="11" y="617" width="4" height="1" fill="#5f6368"/><rect x="11" y="629" width="4" height="1" fill="#5f6368"/><rect x="7" y="641" width="8" height="1" fill="#5f6368"/><rect x="11" y="653" width="4" height="1" fill="#5f6368"/><rect x="11" y="665" width="4" height="1" fill="#5f6368"/><rect x="11" y="677" width="4" height="1" fill="#5f6368"/><rect x="11" y="689" width="4" height="1" fill="#5f6368"/><rect x="11" y="701" width="4" height="1" fill="#5f6368"/><rect x="11" y="713" width="4" height="1" fill="#5f6368"/><rect x="11" y="725" width="4" height="1" fill="#5f6368"/></svg>
<span class="t" style="left:-24px;top:312px;width:60px;text-align:center;font-size:10px;color:#444746;transform:rotate(-90deg);transform-origin:50% 50%;">1</span>
<span class="t" style="left:-24px;top:505px;width:60px;text-align:center;font-size:10px;color:#444746;transform:rotate(-90deg);transform-origin:50% 50%;">1</span>
<span class="t" style="left:-24px;top:601px;width:60px;text-align:center;font-size:10px;color:#444746;transform:rotate(-90deg);transform-origin:50% 50%;">2</span>
<span class="t" style="left:-24px;top:697px;width:60px;text-align:center;font-size:10px;color:#444746;transform:rotate(-90deg);transform-origin:50% 50%;">3</span>
<span class="t" style="left:-24px;top:793px;width:60px;text-align:center;font-size:10px;color:#444746;transform:rotate(-90deg);transform-origin:50% 50%;">4</span>
<span class="t" style="left:-24px;top:889px;width:60px;text-align:center;font-size:10px;color:#444746;transform:rotate(-90deg);transform-origin:50% 50%;">5</span>
<span class="t" style="left:-24px;top:985px;width:60px;text-align:center;font-size:10px;color:#444746;transform:rotate(-90deg);transform-origin:50% 50%;">6</span>
<svg class="a" style="left:36.5px;top:231.5px;" width="25" height="25" viewBox="0 0 24 24" fill="#444746"><path d="M20 11H7.83l5.59-5.59L12 4l-8 8 8 8 1.41-1.41L7.83 13H20v-2z"/></svg>
<span class="t" id="t21" style="left:44.0px;top:288.8px;font-size:14px;color:#444746;transform:scaleX(1.0768);-webkit-text-stroke:.4px #444746;">Document tabs</span>
<svg class="a" style="left:243.8px;top:287.0px;" width="18" height="18" viewBox="0 0 24 24" fill="#1f1f1f"><path d="M19 13h-6v6h-2v-6H5v-2h6V5h2v6h6v2z"/></svg>
<div class="a" style="left:32px;top:322px;width:248px;height:40px;background:#d3e3fd;border-radius:20px;"></div>
<svg class="a" style="left:51.0px;top:333.0px;" width="18" height="18" viewBox="0 0 24 24" fill="#041e49"><path d="M19 5v14H5V5h14m0-2H5c-1.100 0-2 .9-2 2v14c0 1.100.9 2 2 2h14c1.100 0 2-.9 2-2V5c0-1.100-.9-2-2-2zm-5 14H7v-2h7v2zm3-4H7v-2h10v2zm0-4H7V7h10v2z"/></svg>
<span class="t" id="t22" style="left:79.6px;top:335.1px;font-size:14px;color:#041e49;transform:scaleX(0.9606);-webkit-text-stroke:.4px #041e49;">Tab 1</span>
<svg class="a" style="left:243.8px;top:333.0px;" width="18" height="18" viewBox="0 0 24 24" fill="#1f1f1f"><path d="M12 8c1.1 0 2-.9 2-2s-.9-2-2-2-2 .9-2 2 .9 2 2 2zm0 2c-1.1 0-2 .9-2 2s.9 2 2 2 2-.9 2-2-.9-2-2-2zm0 6c-1.1 0-2 .9-2 2s.9 2 2 2 2-.9 2-2-.9-2-2-2z"/></svg>
<div class="a" style="left:59px;top:372px;width:2px;height:16px;background:#1c3f94;"></div>
<span class="t" id="t23" style="left:82.4px;top:373.1px;font-size:14px;color:#2456b4;transform:scaleX(1.0102);">Portal Email Automations...</span>
<div class="a" style="left:532px;top:200px;width:816px;height:107px;background:#fff;border:1px solid #c7c9cc;clip-path:inset(16px -2px -2px -2px);"></div>
<div class="a" style="left:532px;top:317px;width:816px;height:730px;background:#fff;border:1px solid #c7c9cc;"></div>
<span class="t s" id="t24" style="left:630.0px;top:417.1px;font-size:21px;color:#0d0d0d;font-weight:700;transform:scaleX(1.0632);"># Membership Payment Confirmation (One-Time / Installments)</span>
<span class="t s" id="t25" style="left:629.6px;top:491.9px;font-size:21px;color:#0d0d0d;font-weight:700;transform:scaleX(1.0112);">Purpose:</span>
<span class="t s" id="t26" style="left:717.2px;top:491.0px;font-size:22px;color:#0d0d0d;transform:scaleX(1.0679);-webkit-text-stroke:.2px #0d0d0d;">To confirm to the member that their payment was</span>
<span class="t s" id="t27" style="left:629.3px;top:519.7px;font-size:22px;color:#0d0d0d;transform:scaleX(1.0373);-webkit-text-stroke:.2px #0d0d0d;">successful.</span>
<span class="t s" id="t28" style="left:629.3px;top:567.1px;font-size:21px;color:#0d0d0d;font-weight:700;transform:scaleX(1.0542);">When it is sent:</span>
<span class="t s" id="t29" style="left:677.3px;top:610.6px;font-size:22px;color:#0d0d0d;transform:scaleX(1.0573);-webkit-text-stroke:.2px #0d0d0d;">After a membership payment succeeds and a record is being</span>
<span class="t s" id="t30" style="left:677.3px;top:640.3px;font-size:22px;color:#0d0d0d;transform:scaleX(1.0888);-webkit-text-stroke:.2px #0d0d0d;">created under the object Membership<span class="u">_</span>Payment<span class="u">_</span><span class="u">_</span>c and the</span>
<span class="t s" id="t31" style="left:677.3px;top:669.7px;font-size:22px;color:#0d0d0d;transform:scaleX(1.0885);-webkit-text-stroke:.2px #0d0d0d;">field Status<span class="u">_</span><span class="u">_</span>c</span>
<span class="t s" id="t32" style="left:826.7px;top:669.7px;font-size:22px;color:#0d0d0d;transform:scaleX(1.0531);-webkit-text-stroke:.2px #0d0d0d;">an email will be sent to the member and</span>
<span class="t s" id="t33" style="left:677.3px;top:699.5px;font-size:22px;color:#0d0d0d;transform:scaleX(1.0600);-webkit-text-stroke:.2px #0d0d0d;">Applies to both one-time payments and installment</span>
<span class="t s" id="t34" style="left:677.3px;top:728.6px;font-size:22px;color:#0d0d0d;transform:scaleX(1.0509);-webkit-text-stroke:.2px #0d0d0d;">payments.</span>
<span class="t s" id="t35" style="left:629.4px;top:775.7px;font-size:21px;color:#0d0d0d;font-weight:700;transform:scaleX(1.0674);">Who receives it</span>
<span class="t s" id="t36" style="left:677.3px;top:819.5px;font-size:22px;color:#0d0d0d;transform:scaleX(1.0509);-webkit-text-stroke:.2px #0d0d0d;">The email address stored on the member’s profile.</span>
<span class="t s" id="t37" style="left:629.4px;top:866.1px;font-size:21px;color:#0d0d0d;font-weight:700;transform:scaleX(1.0698);">Notes for staff</span>
<span class="t s" id="t38" style="left:677.3px;top:910.3px;font-size:22px;color:#0d0d0d;transform:scaleX(1.0481);-webkit-text-stroke:.2px #0d0d0d;">This email is automatic; staff do not need to send it manually.</span>
<span class="t s" id="t39" style="left:677.3px;top:939.7px;font-size:22px;color:#0d0d0d;transform:scaleX(1.0589);-webkit-text-stroke:.2px #0d0d0d;">To test in a sandbox, you can create a test member, make a</span>
<span class="t s" id="t40" style="left:677.3px;top:969.3px;font-size:22px;color:#0d0d0d;transform:scaleX(1.0602);-webkit-text-stroke:.2px #0d0d0d;">test payment, and check that the email is delivered.</span>
<div class="a" style="left:654.75px;top:618.95px;width:8.5px;height:8.5px;background:#0d0d0d;border-radius:50%;"></div>
<div class="a" style="left:654.75px;top:708.05px;width:8.5px;height:8.5px;background:#0d0d0d;border-radius:50%;"></div>
<div class="a" style="left:654.75px;top:828.05px;width:8.5px;height:8.5px;background:#0d0d0d;border-radius:50%;"></div>
<div class="a" style="left:654.75px;top:918.85px;width:8.5px;height:8.5px;background:#0d0d0d;border-radius:50%;"></div>
<div class="a" style="left:654.75px;top:948.05px;width:8.5px;height:8.5px;background:#0d0d0d;border-radius:50%;"></div>
<div class="a" style="left:821.6px;top:668px;width:1.3px;height:25.5px;background:#bdbdbd;"></div>
<svg class="a" style="left:1244px;top:650px;" width="9" height="17" viewBox="0 0 9 17"><path d="M1.500 .5H3.500Q4.500 .5 4.500 1.500Q4.500 .5 5.500 .5H7.500M4.500 1.500V15.500M1.500 16.500H3.500Q4.500 16.500 4.500 15.500Q4.500 16.500 5.500 16.500H7.500" fill="none" stroke="#222" stroke-width="1"/></svg>
<div class="a" style="left:1908px;top:287px;width:8px;height:48px;background:#dadce0;border-radius:4px;"></div>
<div class="a" style="left:1896px;top:984px;width:40px;height:40px;border-radius:20px;background:#fff;box-shadow:0 1px 3px rgba(60,64,67,.35);"></div>
<svg class="a" style="left:1900.5px;top:995.0px;" width="18" height="18" viewBox="0 0 24 24" fill="#444746"><path d="M15.41 7.41L14 6l-6 6 6 6 1.41-1.41L10.83 12z"/></svg>
<div class="a" style="left:0px;top:1032px;width:1920px;height:48px;background:#1d1d1d;"></div>
<svg class="a" style="left:20px;top:1044px;" width="24" height="22" viewBox="0 0 24 22"><defs><linearGradient id="sun" x1="0" y1="0" x2="1" y2="1"><stop offset="0" stop-color="#ffc93a"/><stop offset="1" stop-color="#f0801f"/></linearGradient></defs><circle cx="10.500" cy="11" r="10" fill="url(#sun)"/><path d="M11.500 17.500a3.300 3.300 0 0 1 .4-6.500 4.600 4.600 0 0 1 8.600 1 2.800 2.800 0 0 1 .3 5.500z" fill="#c3d8f5"/></svg>
<span class="t" id="t41" style="left:51.0px;top:1042.6px;font-size:10.8px;color:#ffffff;transform:scaleX(1.0027);-webkit-text-stroke:.25px #fff;">78°F</span>
<span class="t" id="t42" style="left:50.0px;top:1058.7px;font-size:10.8px;color:#d2d2d2;transform:scaleX(1.1378);-webkit-text-stroke:.25px #d2d2d2;">Mostly sunny</span>
<svg class="a" style="left:485px;top:1045px;" width="24" height="24" viewBox="0 0 24 24"><defs><linearGradient id="wl" x1="0" y1="0" x2="1" y2="1"><stop offset="0" stop-color="#6fd8ff"/><stop offset="1" stop-color="#0c8ce9"/></linearGradient></defs><g fill="url(#wl)"><rect width="11.300" height="11.300" rx=".8"/><rect x="12.700" width="11.300" height="11.300" rx=".8"/><rect y="12.700" width="11.300" height="11.300" rx=".8"/><rect x="12.700" y="12.700" width="11.300" height="11.300" rx=".8"/></g></svg>
<div class="a" style="left:521px;top:1040px;width:218px;height:30px;border-radius:16px;background:#333333;border:1px solid #484848;"></div>
<svg class="a" style="left:530px;top:1046px;" width="20" height="20" viewBox="0 0 20 20"><circle cx="8.500" cy="8.500" r="5.800" fill="none" stroke="#e0e0e0" stroke-width="1.600"/><path d="M12.800 12.800L17 17" stroke="#e0e0e0" stroke-width="1.800" stroke-linecap="round"/></svg>
<span class="t" id="t43" style="left:558.0px;top:1048.9px;font-size:14px;color:#dcdcdc;transform:scaleX(0.9198);">Search</span>
<svg class="a" style="left:690px;top:1040px;" width="48" height="32" viewBox="0 0 48 32"><circle cx="21.700" cy="12.500" r="11.500" fill="#f6c453"/><circle cx="17" cy="9" r="2" fill="#e9a93c"/><circle cx="25" cy="16" r="2.500" fill="#e9a93c"/><circle cx="16.500" cy="17.500" r="1.500" fill="#e9a93c"/><path d="M1 27l3-9 2.500 5 2.500-8 3 9 2-3 2 6zM28 27l2.500-6 2 3 3-9 2.500 7 2.500-5 3 8 1.500 2z" fill="#3f51c9"/><path d="M2 28c8-4 30-6 42-1-10 3-32 4-42 1z" fill="#dfe6f5"/></svg>
<div class="a" style="left:753px;top:1051px;width:18px;height:16px;background:#7a7a7a;border-radius:2px;"></div>
<div class="a" style="left:759px;top:1045px;width:18px;height:16px;background:#f2f2f2;border-radius:2px;"></div>
<div class="a" style="left:759px;top:1051px;width:12px;height:10px;background:#bdbdbd;"></div>
<svg class="a" style="left:796px;top:1043px;" width="26" height="26" viewBox="0 0 26 26"><path d="M13 1.500A11.500 11.500 0 0 1 13 24.500H3l-1.500 1.500V13A11.500 11.500 0 0 1 13 1.500z" fill="#6b6fd6"/><rect x="6.500" y="8.500" width="10" height="8.500" rx="1.500" fill="#fff"/><path d="M17 11.500l3.500-2v7l-3.500-2z" fill="#fff"/></svg>
<svg class="a" style="left:841px;top:1044px;" width="25" height="23" viewBox="0 0 25 23"><path d="M1 2.500A1.500 1.500 0 0 1 2.500 1H9l2.500 2.500H22.500A1.500 1.500 0 0 1 24 5V8H1z" fill="#f0a81e"/><rect x="1" y="5.500" width="23" height="16.500" rx="1.500" fill="#fbd05a"/><path d="M6 22v-5.500A1.500 1.500 0 0 1 7.500 15h10A1.500 1.500 0 0 1 19 16.500V22z" fill="#1e88e5"/><rect x="9" y="17.500" width="7" height="1.500" fill="#0f64b5"/></svg>
<div class="a" style="left:850px;top:1072px;width:6px;height:2.5px;background:#8d8d8d;border-radius:2px;"></div>
<svg class="a" style="left:884px;top:1043px;" width="26" height="26" viewBox="0 0 26 26"><defs><linearGradient id="eg" x1="0" y1="1" x2="1" y2="0"><stop offset="0" stop-color="#0c59a4"/><stop offset=".55" stop-color="#1e9de0"/><stop offset="1" stop-color="#5fd35a"/></linearGradient></defs><circle cx="13" cy="13" r="12" fill="url(#eg)"/><path d="M24.500 16c-2 3.500-7 4-9.500 1.500-2-2-1.500-4.500.5-5.500-3-.5-7 1.500-7 6 0 4 4 7 8 6.500 4-.5 7-4 8-8.500z" fill="#0b4f94"/><path d="M9.500 13.500c0-2 2-4 5-4 3.500 0 5 2.500 4.500 4.500-.3 1-1.500 1.500-3 1.500 1-1.500 0-3.500-2-3.500-2 0-4 1.500-4.500 1.500z" fill="#1d1d1d"/></svg>
<svg class="a" style="left:928px;top:1043px;" width="26" height="26" viewBox="0 0 26 26"><defs><linearGradient id="ff" x1=".7" y1="0" x2=".3" y2="1"><stop offset="0" stop-color="#ffd43b"/><stop offset=".5" stop-color="#ff7a1a"/><stop offset="1" stop-color="#e31587"/></linearGradient></defs><path d="M13 2c1 2 3.500 3 5.500 2.500-.5 1.500 0 2.500 1.500 3.500 3 2.500 4.500 6 3.500 10A11.500 11.500 0 0 1 1.500 15C1 11 2.500 7.500 5 5.500c0 1.500.5 2.500 1.500 3C7 6 9.500 3.500 13 2z" fill="url(#ff)"/><circle cx="13.500" cy="14.500" r="5.500" fill="#7b3fd1"/><path d="M8.500 12c2-2 5-2 7 0-2 0-3 1-3.500 2.500-1-.5-2.500-1-3.500-2.500z" fill="#ff9a2e"/></svg>
<div class="a" style="left:970px;top:1036px;width:33px;height:38px;border-radius:5px;background:#272727;border:1px solid #333;"></div>
<div class="a" style="left:965px;top:1036px;width:34px;height:38px;border-radius:5px;background:#2e2e2e;border:1px solid #3b3b3b;"></div>
<svg class="a" style="left:972px;top:1043px;" width="26" height="26" viewBox="0 0 26 26"><circle cx="13" cy="13" r="12" fill="#fff"/><path d="M13 1a12 12 0 0 1 10.400 6H13a6 6 0 0 0-5.200 3L2.600 7A12 12 0 0 1 13 1z" fill="#ea4335"/><path d="M2.600 7l5.200 9a6 6 0 0 0 5.200 3l-3.500 5.500A12 12 0 0 1 2.600 7z" fill="#34a853"/><path d="M23.400 7A12 12 0 0 1 9.500 24.500L14.700 16a6 6 0 0 0 3.500-9z" fill="#fbbc04"/><circle cx="13" cy="13" r="5.400" fill="#fff"/><circle cx="13" cy="13" r="4.300" fill="#4285f4"/></svg>
<svg class="a" style="left:986px;top:1039px;" width="16" height="16" viewBox="0 0 32 32"><defs><clipPath id="c3"><circle cx="16" cy="16" r="16"/></clipPath></defs><g clip-path="url(#c3)"><rect width="32" height="32" fill="#dcdbd8"/><path d="M2 32C3 26.500 8 24 12 22.800L16 30l4-7.200C24 24 29 26.500 30 32z" fill="#b3d4ec"/><path d="M11.800 19.500h8.500V23.200L16 30.800 11.800 23.200z" fill="#c4946c"/><ellipse cx="16.200" cy="12.500" rx="5.800" ry="7.500" fill="#c99a72"/><path d="M10.400 12c0 7 2.100 10.500 5.800 10.500S22 19 22 12c-.5 3.500-2.500 4.500-5.800 4.500S10.900 15.500 10.400 12z" fill="#1d1612"/><ellipse cx="16.200" cy="18.300" rx="1.800" ry="1" fill="#a98366"/><path d="M9.300 13.500C7.500 5 11 .6 16.200 .6S25 5 23 13.500C22.500 9.500 21 7.500 16.200 7.500S9.800 9.500 9.300 13.500z" fill="#17110e"/></g></svg>
<div class="a" style="left:977px;top:1071.5px;width:16px;height:3px;background:#4cc2ff;border-radius:2px;"></div>
<svg class="a" style="left:1016px;top:1043px;" width="26" height="26" viewBox="0 0 26 26"><circle cx="13" cy="13" r="12" fill="#fff"/><path d="M13 1a12 12 0 0 1 10.400 6H13a6 6 0 0 0-5.200 3L2.600 7A12 12 0 0 1 13 1z" fill="#ea4335"/><path d="M2.600 7l5.200 9a6 6 0 0 0 5.200 3l-3.500 5.500A12 12 0 0 1 2.600 7z" fill="#34a853"/><path d="M23.400 7A12 12 0 0 1 9.500 24.500L14.700 16a6 6 0 0 0 3.500-9z" fill="#fbbc04"/><circle cx="13" cy="13" r="5.400" fill="#fff"/><circle cx="13" cy="13" r="4.300" fill="#4285f4"/></svg>
<div class="a" style="left:1028px;top:1041px;width:14px;height:14px;background:#2b2b2b;border-radius:7px;transform:rotate(20deg);"></div>
<div class="a" style="left:1031px;top:1044px;width:8px;height:8px;background:#5a5a5a;border-radius:2px;transform:rotate(20deg);"></div>
<svg class="a" style="left:1060px;top:1043px;" width="26" height="26" viewBox="0 0 26 26"><circle cx="13" cy="13" r="12" fill="#fff"/><path d="M13 1a12 12 0 0 1 10.400 6H13a6 6 0 0 0-5.200 3L2.600 7A12 12 0 0 1 13 1z" fill="#ea4335"/><path d="M2.600 7l5.200 9a6 6 0 0 0 5.200 3l-3.500 5.500A12 12 0 0 1 2.600 7z" fill="#34a853"/><path d="M23.400 7A12 12 0 0 1 9.500 24.500L14.700 16a6 6 0 0 0 3.500-9z" fill="#fbbc04"/><circle cx="13" cy="13" r="5.400" fill="#fff"/><circle cx="13" cy="13" r="4.300" fill="#4285f4"/></svg>
<div class="a" style="left:1074px;top:1039px;width:16px;height:16px;background:#d81b60;border-radius:8px;"></div>
<span class="t" style="left:1082.0px;top:1042.0px;font-size:10px;color:#ffffff;width:60px;margin-left:-30px;text-align:center;">S</span>
<div class="a" style="left:1070px;top:1072px;width:6px;height:2.5px;background:#8d8d8d;border-radius:2px;"></div>
<svg class="a" style="left:1105px;top:1046px;" width="24" height="19" viewBox="0 0 24 19"><rect width="24" height="19" rx="1" fill="#cfe9f8"/><path d="M1 15l3-7 2 4 2-9 2.500 10 2-5 2 4 2.500-9 2 9 2-3 2 4V18H1z" fill="#7cc0ea"/><path d="M1 15l3-7 2 4 2-9 2.500 10 2-5 2 4 2.500-9 2 9 2-3 2 4" fill="none" stroke="#2b8fd6" stroke-width="1"/></svg>
<svg class="a" style="left:1149px;top:1046px;" width="23" height="19" viewBox="0 0 23 19"><rect width="23" height="19" rx="1" fill="#0a0a0a" stroke="#8a8a8a" stroke-width="1"/><rect x="1" y="1" width="21" height="2.500" fill="#5a5a5a"/><path d="M3 8h2.500M7 6.500v3M9 8.500h2M13 10h6" stroke="#fff" stroke-width="1.200"/></svg>
<svg class="a" style="left:1193px;top:1043px;" width="25" height="26" viewBox="0 0 25 26"><path d="M6 2c-4 1-5.500 5-4.500 9 .7 3 2 5.500 4 6l1 6c.3 2 3 2 3.500 0l.5-6c2 .5 4 0 5-1.500 1 1.500 3.500 2 5.500 1-1.500-.5-2-1.500-2-2.500 2.500-2.500 4-7 2-10.500C19 .5 14 1 12.500 2.500 11 1.500 8 1.500 6 2z" fill="#5d86b8" stroke="#dfe8f3" stroke-width="1.100"/><path d="M12.500 3c-1.500 3-1.500 8 0 12" stroke="#dfe8f3" stroke-width="1" fill="none"/><circle cx="15.500" cy="7" r=".9" fill="#fff"/></svg>
<svg class="a" style="left:1238px;top:1043px;" width="24" height="25" viewBox="0 0 24 25"><path d="M17 .5l6 2.800v18.400l-6 2.800-11-10-3.500 2.700L.5 16V9l2-1.200L6 10.500z" fill="#2aa7ee"/><path d="M17 .5l6 2.800v18.400l-6 2.800z" fill="#1272c4"/><path d="M17 7.500v10l-6.500-5z" fill="#1d1d1d"/></svg>
<div class="a" style="left:1246px;top:1072px;width:6px;height:2.5px;background:#8d8d8d;border-radius:2px;"></div>
<svg class="a" style="left:1281px;top:1043px;" width="25" height="25" viewBox="0 0 25 25"><defs><linearGradient id="pc" x1="0" y1="0" x2="1" y2="1"><stop offset="0" stop-color="#21d789"/><stop offset=".5" stop-color="#a7e635"/><stop offset="1" stop-color="#fcf84a"/></linearGradient></defs><path d="M0 3l14-3 10 6-1 14-9 5-14-4z" fill="url(#pc)"/><path d="M0 3l8-1v8z" fill="#07c3f2"/><rect x="4" y="4" width="16" height="16" fill="#000"/><rect x="6" y="16.500" width="6" height="1.200" fill="#fff"/></svg>
<span class="t" style="left:1293.0px;top:1048.7px;font-size:8px;color:#ffffff;width:60px;margin-left:-30px;text-align:center;font-weight:700;">PC</span>
<svg class="a" style="left:1324px;top:1043px;" width="26" height="26" viewBox="0 0 26 26"><g transform="rotate(45 13 13)"><rect x="4" y="4" width="9" height="9" rx="1" fill="#e8625a"/><rect x="13" y="4" width="9" height="9" rx="1" fill="#6cc04a"/><rect x="4" y="13" width="9" height="9" rx="1" fill="#5b8def"/><rect x="13" y="13" width="9" height="9" rx="1" fill="#f5d55a"/></g><path d="M13 5v15M13 12l5-3" stroke="#1d1d1d" stroke-width="1.600" fill="none"/><circle cx="13" cy="20" r="1.800" fill="#1d1d1d"/><circle cx="18" cy="9.500" r="1.800" fill="#1d1d1d"/><circle cx="13" cy="5.500" r="1.800" fill="#1d1d1d"/></svg>
<div class="a" style="left:1369px;top:1044px;width:24px;height:24px;background:#ffffff;"></div>
<svg class="a" style="left:1372px;top:1047px;" width="18" height="14" viewBox="0 0 18 14"><rect x="1" y="0" width="16" height="10" rx="1" fill="#2d7fc4"/><rect x="2.500" y="1.500" width="13" height="7" fill="#dff0fb"/><rect x="4" y="3" width="4" height="3" fill="#3aa655"/><rect x="9" y="3" width="4" height="3" fill="#2d7fc4"/><rect x="6" y="11" width="6" height="1.500" fill="#2d7fc4"/></svg>
<span class="t" style="left:1381.0px;top:1061.2px;font-size:4.5px;color:#555555;width:60px;margin-left:-30px;text-align:center;">TaskPro</span>
<div class="a" style="left:1378px;top:1072px;width:6px;height:2.5px;background:#8d8d8d;border-radius:2px;"></div>
<svg class="a" style="left:1415px;top:1043px;" width="20" height="25" viewBox="0 0 20 25"><path d="M2 0h12l6 6v17a2 2 0 0 1-2 2H2a2 2 0 0 1-2-2V2a2 2 0 0 1 2-2z" fill="#1577d4"/><path d="M14 0l6 6h-6z" fill="#5fb2f5"/><rect x="4" y="9" width="6" height="1.600" fill="#fff"/><rect x="11.500" y="8.500" width="4.500" height="3.500" fill="#cfe6fb"/><rect x="4" y="13" width="12" height="1.600" fill="#fff"/><rect x="4" y="16.500" width="9" height="1.600" fill="#fff"/></svg>
<div class="a" style="left:1422px;top:1072px;width:6px;height:2.5px;background:#8d8d8d;border-radius:2px;"></div>
<svg class="a" style="left:1670px;top:1050px;" width="14" height="12" viewBox="0 0 14 12"><path d="M1.500 9.500L7 4l5.500 5.500" fill="none" stroke="#fff" stroke-width="1.500"/></svg>
<svg class="a" style="left:1700px;top:1049px;" width="18" height="13" viewBox="0 0 18 13"><path d="M4.500 12.500a4 4 0 0 1-.6-7.900A5.500 5.500 0 0 1 14 4.500a4 4 0 0 1-.5 8z" fill="#c8c8c8"/><path d="M7 12.500l6-7.500a4 4 0 0 1 .5 7.500z" fill="#efefef"/></svg>
<svg class="a" style="left:1733px;top:1049.5px;" width="16" height="12" viewBox="0 0 16 12"><rect x=".6" y=".6" width="14.800" height="10.800" rx="1.500" fill="none" stroke="#fff" stroke-width="1.200"/><path d="M3 4h1.500M6 4h1.500M9 4h1.500M12 4h1M3 6.500h1.500M6 6.500h1.500M9 6.500h1.500M12 6.500h1M4.500 9h7" stroke="#fff" stroke-width="1.200"/></svg>
<svg class="a" style="left:1764px;top:1048px;" width="18" height="15" viewBox="0 0 18 15"><g fill="none" stroke="#fff" stroke-width="1.400" stroke-linecap="round"><path d="M1.500 5.500a10.500 10.500 0 0 1 15 0"/><path d="M4 8.300a7 7 0 0 1 10 0"/><path d="M6.500 11a3.500 3.500 0 0 1 5 0"/></g><circle cx="9" cy="13.300" r="1.200" fill="#fff"/></svg>
<svg class="a" style="left:1788px;top:1048px;" width="18" height="16" viewBox="0 0 18 16"><path d="M1 5.500h2.500L7.500 2v12L3.500 10.500H1z" fill="none" stroke="#fff" stroke-width="1.200" stroke-linejoin="round"/><g fill="none" stroke="#fff" stroke-width="1.200" stroke-linecap="round"><path d="M10 5.500a3.500 3.500 0 0 1 0 5"/><path d="M12 3.500a6.300 6.300 0 0 1 0 9"/><path d="M14 1.500a9 9 0 0 1 0 13"/></g></svg>
<span class="t" id="t44" style="left:1834.0px;top:1042.9px;font-size:10.8px;color:#ffffff;transform:scaleX(1.0517);-webkit-text-stroke:.2px #fff;">5:14 PM</span>
<span class="t" id="t45" style="left:1821.6px;top:1058.9px;font-size:10.8px;color:#ffffff;transform:scaleX(1.1426);-webkit-text-stroke:.2px #fff;">12/4/2025</span>
<svg class="a" style="left:1884px;top:1048px;" width="16" height="17" viewBox="0 0 16 17"><path d="M8 .5a5 5 0 0 1 5 5V10l1.800 2.500v1H1.200v-1L3 10V5.500a5 5 0 0 1 5-5zM6 14.500h4a2 2 0 0 1-4 0z" fill="#82d5f7"/></svg>
</body></html>
